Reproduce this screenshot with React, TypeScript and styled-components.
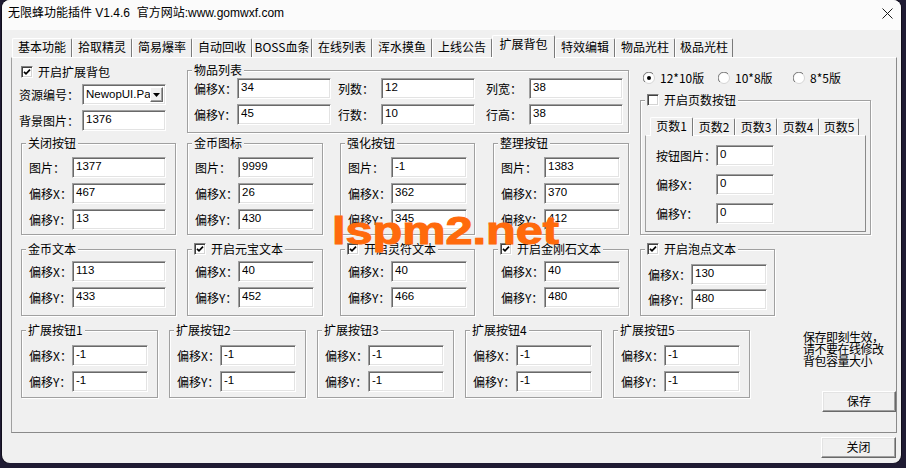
import React from 'react'
import styled, { createGlobalStyle } from 'styled-components'

const GlobalStyle = createGlobalStyle`
  html, body { margin: 0; padding: 0; }
  body {
    background: #1f1b33;
    font-family: "Noto Sans CJK SC", "Liberation Sans", sans-serif;
    font-size: 12px;
    line-height: 16px;
    color: #000;
  }
  *, *::before, *::after { box-sizing: border-box; }
`

const Window = styled.div`
  margin-left: 2px;
  width: 899px;
  height: 463px;
  background: #f0f0f0;
  border-radius: 8px;
  overflow: hidden;
  box-shadow: 0 0 0 1px rgba(0, 0, 0, 0.45);
`

const TitleBar = styled.div`
  height: 30px;
  display: flex;
  align-items: center;
  justify-content: space-between;
  padding: 0 8px 4px 6px;
  background: #fbfbfb;
`

const TitleText = styled.span`
  font-family: "Liberation Sans", "Noto Sans CJK SC", sans-serif;
  font-size: 12px;
  white-space: pre;
`

const TabControl = styled.div<{ $pl: number }>`
  padding-left: ${p => p.$pl}px;
`

const TabStrip = styled.div<{ $h: number; $pl: number }>`
  display: flex;
  align-items: flex-end;
  height: ${p => p.$h}px;
  padding-left: ${p => p.$pl}px;
`

const Tab = styled.div<{ $w: number; $h: number; $active?: boolean }>`
  position: relative;
  z-index: ${p => (p.$active ? 2 : 1)};
  flex-shrink: 0;
  width: ${p => p.$w}px;
  height: ${p => p.$h}px;
  margin-bottom: ${p => (p.$active ? -1 : 0)}px;
  background: #f0f0f0;
  border: 1px solid;
  border-bottom: 0;
  border-color: #fff #7a7a7a #f0f0f0 #fff;
  border-radius: 2px 2px 0 0;
  text-align: center;
  white-space: nowrap;
  line-height: 16px;
`

const TabPanel = styled.div<{ $w: number; $h: number }>`
  position: relative;
  width: ${p => p.$w}px;
  height: ${p => p.$h}px;
  border: 1px solid;
  border-color: #fff #8a8a8a #8a8a8a #a0a0a0;
`

const InnerBody = styled.div`
  display: flex;
  flex-direction: column;
  gap: 8px;
  padding: 9px 0 0 10px;
`

const TopSection = styled.div`
  display: flex;
  align-items: flex-start;
  padding-top: 6px;
`

const LeftArea = styled.div`
  width: 618px;
  flex-shrink: 0;
  display: flex;
  flex-direction: column;
`

const RightCol = styled.div`
  width: 231px;
  margin: 6px 0 0 10px;
  display: flex;
  flex-direction: column;
`

const Row = styled.div<{ $mt?: number; $pl?: number }>`
  display: flex;
  align-items: flex-start;
  margin-top: ${p => p.$mt ?? 0}px;
  padding-left: ${p => p.$pl ?? 0}px;
`

const LeftCol = styled.div`
  width: 147px;
  flex-shrink: 0;
  display: flex;
  flex-direction: column;
`

const CheckRow = styled.label`
  display: flex;
  align-items: center;
  gap: 5px;
  height: 16px;
  padding-left: 2px;
  white-space: nowrap;
`

const Group = styled.div<{ $w: number; $ml?: number; $mt?: number; $pt: number; $pb: number; $pl?: number; $gap: number }>`
  position: relative;
  flex-shrink: 0;
  width: ${p => p.$w}px;
  margin-left: ${p => p.$ml ?? 0}px;
  margin-top: ${p => p.$mt ?? 0}px;
  padding: ${p => `${p.$pt}px 0 ${p.$pb}px ${p.$pl ?? 7}px`};
  border: 1px solid #a0a0a0;
  box-shadow: inset 1px 1px 0 #fff, 1px 1px 0 #fff;
  display: flex;
  flex-direction: column;
  gap: ${p => p.$gap}px;
`

const Legend = styled.div`
  position: absolute;
  top: -9px;
  left: 4px;
  height: 16px;
  padding: 0 2px;
  background: #f0f0f0;
  display: flex;
  align-items: center;
  gap: 5px;
  line-height: 16px;
  white-space: nowrap;
`

const Field = styled.div<{ $mt?: number }>`
  display: flex;
  align-items: center;
  height: 21px;
  margin-top: ${p => p.$mt ?? 0}px;
`

const GLabel = styled.span<{ $w: number; $ml?: number }>`
  width: ${p => p.$w}px;
  margin-left: ${p => p.$ml ?? 0}px;
  flex-shrink: 0;
  white-space: nowrap;
`

const Edit = styled.input<{ $w: number }>`
  width: ${p => p.$w}px;
  height: 21px;
  margin: 0;
  padding: 0 0 3px 3px;
  flex-shrink: 0;
  background: #fff;
  border: 1px solid;
  border-color: #a0a0a0 #fff #fff #a0a0a0;
  box-shadow: inset 1px 1px 0 #696969, inset -1px -1px 0 #e3e3e3;
  font-family: "Liberation Sans", sans-serif;
  font-size: 11.5px;
  color: #000;
  outline: none;
`

const Combo = styled.div`
  width: 84px;
  height: 21px;
  display: flex;
  align-items: center;
  padding: 0 2px 0 3px;
  background: #fff;
  border: 1px solid;
  border-color: #a0a0a0 #fff #fff #a0a0a0;
  box-shadow: inset 1px 1px 0 #696969, inset -1px -1px 0 #e3e3e3;
`

const ComboText = styled.span`
  flex: 1;
  overflow: hidden;
  white-space: nowrap;
  font-family: "Liberation Sans", sans-serif;
  font-size: 11.5px;
  padding-bottom: 1px;
`

const DropBtn = styled.span`
  width: 13px;
  height: 15px;
  flex-shrink: 0;
  display: flex;
  align-items: center;
  justify-content: center;
  background: #f0f0f0;
  border: 1px solid;
  border-color: #fff #696969 #696969 #fff;
  box-shadow: inset -1px -1px 0 #a0a0a0;
`

const CheckBox = styled.span`
  width: 12px;
  height: 12px;
  flex-shrink: 0;
  display: inline-flex;
  align-items: center;
  justify-content: center;
  background: #fff;
  border: 1px solid;
  border-color: #808080 #fff #fff #808080;
  box-shadow: inset 1px 1px 0 #404040, inset -1px -1px 0 #d4d4d4;
`

const RadioRow = styled.div`
  display: flex;
  align-items: center;
  height: 16px;
  padding-left: 3px;
`

const RadioItem = styled.label`
  width: 75px;
  display: flex;
  align-items: center;
  gap: 5px;
  white-space: nowrap;
`

const Side = styled.div`
  width: 93px;
  margin-left: auto;
  display: flex;
  flex-direction: column;
  align-items: flex-end;
`

const Note = styled.div`
  align-self: flex-start;
  margin-top: 1px;
  height: 36px;
  font-size: 12px;
  line-height: 12px;
  letter-spacing: -0.5px;
  white-space: pre-line;
`

const Btn = styled.button<{ $w: number; $mt?: number }>`
  width: ${p => p.$w}px;
  height: 21px;
  margin: ${p => p.$mt ?? 0}px 0 0 0;
  padding: 0 0 1px 0;
  background: #f0f0f0;
  border: 1px solid;
  border-color: #fff #696969 #696969 #fff;
  box-shadow: inset -1px -1px 0 #a0a0a0, inset 1px 1px 0 #e3e3e3;
  font-family: "Noto Sans CJK SC", sans-serif;
  font-size: 12px;
  line-height: 16px;
  color: #000;
`

const Footer = styled.div`
  display: flex;
  justify-content: flex-end;
  margin-top: 4px;
  padding-right: 5px;
`

const Watermark = styled.div`
  position: absolute;
  left: 320px;
  top: 154px;
  z-index: 5;
  font-family: "Liberation Sans", sans-serif;
  font-weight: bold;
  font-size: 38px;
  line-height: 38px;
  color: #ff6a0c;
  -webkit-text-stroke: 1px #ff6a0c;
  text-shadow: 0 0 1px #ffa466;
  transform: scaleX(1.28);
  transform-origin: left top;
  pointer-events: none;
  white-space: nowrap;
`

const Check = ({ on }: { on: boolean }) => (
  <CheckBox>
    {on && (
      <svg width="8" height="8" viewBox="0 0 8 8">
        <path d="M1 3.8 L3 5.8 L7 1.6" fill="none" stroke="#000" strokeWidth="1.7" />
      </svg>
    )}
  </CheckBox>
)

const Radio = ({ on }: { on: boolean }) => (
  <svg width="12" height="12" viewBox="0 0 12 12">
    <circle cx="6" cy="6" r="5.5" fill="#fff" stroke="#d4d4d4" />
    <path d="M1.8 10 A5.5 5.5 0 0 1 10 1.8" fill="none" stroke="#7a7a7a" />
    {on && <circle cx="6" cy="6" r="2" fill="#000" />}
  </svg>
)

type GroupSpec = {
  title: string
  check?: boolean
  w: number
  ml: number
  iw: number
  pt: number
  pb: number
  gap: number
  fields: [string, string][]
}

const FieldGroup = ({ g }: { g: GroupSpec }) => (
  <Group $w={g.w} $ml={g.ml} $pt={g.pt} $pb={g.pb} $gap={g.gap}>
    <Legend>
      {g.check !== undefined && <Check on={g.check} />}
      {g.title}
    </Legend>
    {g.fields.map(([l, v]) => (
      <Field key={l}>
        <GLabel $w={43}>{l}</GLabel>
        <Edit $w={g.iw} value={v} readOnly />
      </Field>
    ))}
  </Group>
)

const tabs = ['基本功能', '拾取精灵', '简易爆率', '自动回收', 'BOSS血条', '在线列表', '浑水摸鱼', '上线公告', '扩展背包', '特效编辑', '物品光柱', '极品光柱']
const tabWidths = [60, 60, 60, 60, 60, 60, 60, 60, 63, 60, 60, 58]
const pageTabs = ['页数1', '页数2', '页数3', '页数4', '页数5']
const pageTabWidths = [43, 42, 42, 42, 40]

const rowB: GroupSpec[] = [
  { title: '关闭按钮', w: 155, ml: 0, iw: 94, pt: 13, pb: 4, gap: 5, fields: [['图片：', '1377'], ['偏移X：', '467'], ['偏移Y：', '13']] },
  { title: '金币图标', w: 136, ml: 11, iw: 76, pt: 13, pb: 4, gap: 5, fields: [['图片：', '9999'], ['偏移X：', '26'], ['偏移Y：', '430']] },
  { title: '强化按钮', w: 135, ml: 17, iw: 76, pt: 13, pb: 4, gap: 5, fields: [['图片：', '-1'], ['偏移X：', '362'], ['偏移Y：', '345']] },
  { title: '整理按钮', w: 136, ml: 18, iw: 76, pt: 13, pb: 4, gap: 5, fields: [['图片：', '1383'], ['偏移X：', '370'], ['偏移Y：', '412']] },
]

const rowC: GroupSpec[] = [
  { title: '金币文本', w: 155, ml: 0, iw: 94, pt: 11, pb: 7, gap: 5, fields: [['偏移X：', '113'], ['偏移Y：', '433']] },
  { title: '开启元宝文本', check: true, w: 136, ml: 11, iw: 76, pt: 11, pb: 7, gap: 5, fields: [['偏移X：', '40'], ['偏移Y：', '452']] },
  { title: '开启灵符文本', check: true, w: 135, ml: 17, iw: 76, pt: 11, pb: 7, gap: 5, fields: [['偏移X：', '40'], ['偏移Y：', '466']] },
  { title: '开启金刚石文本', check: true, w: 136, ml: 18, iw: 76, pt: 11, pb: 7, gap: 5, fields: [['偏移X：', '40'], ['偏移Y：', '480']] },
  { title: '开启泡点文本', check: true, w: 135, ml: 11, iw: 76, pt: 14, pb: 5, gap: 4, fields: [['偏移X：', '130'], ['偏移Y：', '480']] },
]

const rowD: GroupSpec[] = [1, 2, 3, 4, 5].map((n, i) => ({
  title: `扩展按钮${n}`,
  w: 137,
  ml: i === 0 ? 0 : 11,
  iw: 76,
  pt: 14,
  pb: 5,
  gap: 5,
  fields: [['偏移X：', '-1'], ['偏移Y：', '-1']] as [string, string][],
}))

export default function App() {
  return (
    <>
      <GlobalStyle />
      <Window>
        <TitleBar>
          <TitleText>{'无限蜂功能插件 V1.4.6  官方网站:www.gomwxf.com'}</TitleText>
          <svg width="11" height="11" viewBox="0 0 11 11">
            <path d="M0.5 0.5 L10.5 10.5 M10.5 0.5 L0.5 10.5" stroke="#1a1a1a" strokeWidth="1" />
          </svg>
        </TitleBar>

        <TabControl $pl={9}>
          <TabStrip $h={27} $pl={1}>
            {tabs.map((t, i) => (
              <Tab key={t} $w={tabWidths[i]} $h={i === 8 ? 23 : 19} $active={i === 8}>
                {t}
              </Tab>
            ))}
          </TabStrip>

          <TabPanel $w={886} $h={376}>
            <TopSection>
              <LeftArea>
                <Row $pl={7}>
                  <LeftCol>
                    <CheckRow>
                      <Check on />
                      开启扩展背包
                    </CheckRow>
                    <Field $mt={4}>
                      <GLabel $w={63}>资源编号：</GLabel>
                      <Combo>
                        <ComboText>NewopUI.Pak</ComboText>
                        <DropBtn>
                          <svg width="7" height="4" viewBox="0 0 7 4">
                            <path d="M0 0 H7 L3.5 4 Z" fill="#000" />
                          </svg>
                        </DropBtn>
                      </Combo>
                    </Field>
                    <Field $mt={5}>
                      <GLabel $w={63}>背景图片：</GLabel>
                      <Edit $w={84} value="1376" readOnly />
                    </Field>
                  </LeftCol>

                  <Group $w={442} $ml={21} $mt={6} $pt={7} $pb={7} $pl={6} $gap={5}>
                    <Legend>物品列表</Legend>
                    <Field>
                      <GLabel $w={43}>偏移X：</GLabel>
                      <Edit $w={94} value="34" readOnly />
                      <GLabel $w={43} $ml={7}>列数：</GLabel>
                      <Edit $w={94} value="12" readOnly />
                      <GLabel $w={43} $ml={11}>列宽：</GLabel>
                      <Edit $w={94} value="38" readOnly />
                    </Field>
                    <Field>
                      <GLabel $w={43}>偏移Y：</GLabel>
                      <Edit $w={94} value="45" readOnly />
                      <GLabel $w={43} $ml={7}>行数：</GLabel>
                      <Edit $w={94} value="10" readOnly />
                      <GLabel $w={43} $ml={11}>行高：</GLabel>
                      <Edit $w={94} value="38" readOnly />
                    </Field>
                  </Group>
                </Row>

                <Row $mt={10} $pl={9}>
                  {rowB.map(g => (
                    <FieldGroup key={g.title} g={g} />
                  ))}
                </Row>
              </LeftArea>

              <RightCol>
                <RadioRow>
                  <RadioItem><Radio on />12*10版</RadioItem>
                  <RadioItem><Radio on={false} />10*8版</RadioItem>
                  <RadioItem><Radio on={false} />8*5版</RadioItem>
                </RadioRow>

                <Group $w={231} $mt={14} $pt={15} $pb={2} $pl={4} $gap={0}>
                  <Legend>
                    <Check on={false} />
                    开启页数按钮
                  </Legend>
                  <TabControl $pl={0}>
                    <TabStrip $h={19} $pl={5}>
                      {pageTabs.map((t, i) => (
                        <Tab key={t} $w={pageTabWidths[i]} $h={i === 0 ? 19 : 17} $active={i === 0}>
                          {t}
                        </Tab>
                      ))}
                    </TabStrip>
                    <TabPanel $w={221} $h={97}>
                      <InnerBody>
                        <Field>
                          <GLabel $w={60}>按钮图片：</GLabel>
                          <Edit $w={58} value="0" readOnly />
                        </Field>
                        <Field>
                          <GLabel $w={60}>偏移X：</GLabel>
                          <Edit $w={58} value="0" readOnly />
                        </Field>
                        <Field>
                          <GLabel $w={60}>偏移Y：</GLabel>
                          <Edit $w={58} value="0" readOnly />
                        </Field>
                      </InnerBody>
                    </TabPanel>
                  </TabControl>
                </Group>
              </RightCol>
            </TopSection>

            <Row $mt={14} $pl={9}>
              {rowC.map(g => (
                <FieldGroup key={g.title} g={g} />
              ))}
            </Row>

            <Row $mt={14} $pl={9}>
              {rowD.map(g => (
                <FieldGroup key={g.title} g={g} />
              ))}
              <Side>
                <Note>{'保存即刻生效，\n请不要在线修改\n背包容量大小'}</Note>
                <Btn $w={74} $mt={24}>保存</Btn>
              </Side>
            </Row>

            <Watermark>lspm2.net</Watermark>
          </TabPanel>
        </TabControl>

        <Footer>
          <Btn $w={75}>关闭</Btn>
        </Footer>
      </Window>
    </>
  )
}
